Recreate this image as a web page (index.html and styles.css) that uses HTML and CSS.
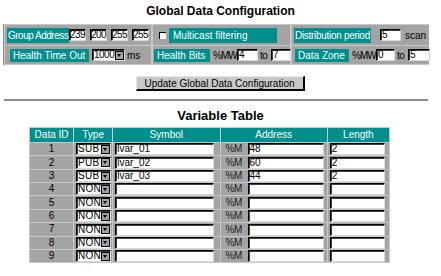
FILE: index.html
```html
<!DOCTYPE html>
<html lang="en">
<head>
  <meta charset="UTF-8" />
  <title>Global Data Configuration</title>
  <link rel="stylesheet" href="styles.css">
</head>
<body>
  <h1 class="title">Global Data Configuration</h1>

  <div class="config">
    <div class="cell">
      <span class="label lb-group">Group Address</span>
      <span class="field ipf">239</span>
      <span class="field ipf">200</span>
      <span class="field ipf">255</span>
      <span class="field ipf">255</span>
    </div>
    <div class="cell">
      <span class="check"></span>
      <span class="label lb-multi">Multicast filtering</span>
    </div>
    <div class="cell">
      <span class="label lb-dist">Distribution period</span>
      <span class="field per">5</span>
      <span class="unit">scan</span>
    </div>

    <div class="cell row2">
      <span class="label lb-health">Health Time Out</span>
      <span class="select sel-ms"><span class="val">1000</span><span class="arrow"></span></span>
      <span class="unit ms">ms</span>
    </div>
    <div class="cell row2">
      <span class="label lb-bits">Health Bits</span>
      <span class="pre">%MW</span>
      <span class="field rng-a">4</span>
      <span class="to">to</span>
      <span class="field rng-b">7</span>
    </div>
    <div class="cell row2">
      <span class="label lb-zone">Data Zone</span>
      <span class="pre">%MW</span>
      <span class="field rng-c">0</span>
      <span class="to">to</span>
      <span class="field rng-d">5</span>
    </div>
  </div>

  <div class="actions">
    <button class="btn">Update Global Data Configuration</button>
  </div>

  <hr class="sep">

  <h2 class="title big">Variable Table</h2>

  <table class="vars">
    <colgroup>
      <col class="c-id"><col class="c-type"><col class="c-sym"><col class="c-addr"><col class="c-len">
    </colgroup>
    <thead>
      <tr><th>Data ID</th><th>Type</th><th>Symbol</th><th>Address</th><th>Length</th></tr>
    </thead>
    <tbody id="rows"></tbody>
  </table>

  <script>
    const data = [
      ["SUB", "lvar_01", "48", "2"],
      ["PUB", "lvar_02", "60", "2"],
      ["SUB", "lvar_03", "44", "2"]
    ];
    let html = "";
    for (let i = 1; i <= 9; i++) {
      const d = data[i - 1] || ["NON", "", "", ""];
      html += `<tr>
        <td class="id">${i}</td>
        <td><span class="select sel-type"><span class="val">${d[0]}</span><span class="arrow"></span></span></td>
        <td><span class="field sym">${d[1]}</span></td>
        <td><span class="pm">%M</span><span class="field adr">${d[2]}</span></td>
        <td><span class="field len">${d[3]}</span></td>
      </tr>`;
    }
    document.getElementById("rows").innerHTML = html;
  </script>
</body>
</html>
```

FILE: styles.css
```css
body {
  margin: 0;
  padding: 0;
  font-family: 'Liberation Sans', Arial, sans-serif;
  font-size: 10px;
  background-color: #fff;
  color: #000;
}
.title {
  font-size: 12px;
  font-weight: bold;
  text-align: center;
  margin: 0;
  padding-top: 4px;
  height: 20px;
  line-height: 14px;
}
.title.big {
  font-size: 13px;
  height: 16px;
  padding-top: 7px;
  line-height: 16px;
}

/* config box */
.config {
  display: grid;
  grid-template-columns: 146px 137px 137px;
  grid-template-rows: 20px 18px;
  gap: 1px 2px;
  margin-left: 3px;
  width: 424px;
  padding: 1px 0 1px 1px;
  background-color: #c8c8c8;
  border-left: 1px solid #8c8c8c;
}
.cell {
  background-color: #a4a4a4;
  display: flex;
  align-items: center;
  white-space: nowrap;
}
.cell > * {
  flex-shrink: 0;
}
.label {
  background-color: #008f8c;
  color: #fff;
  height: 15px;
  line-height: 15px;
  padding: 0 1px;
  box-sizing: border-box;
  overflow: hidden;
}
.row2 .label {
  height: 13px;
  line-height: 13px;
  padding: 0 3px;
}
.lb-group {
  width: 62px;
  letter-spacing: -0.5px;
  margin-left: 2px;
}
.lb-multi {
  width: 108px;
  padding-left: 4px;
}
.lb-dist {
  width: 77px;
  margin-left: 2px;
  letter-spacing: -0.3px;
}
.lb-health {
  width: 79px;
  margin-left: 5px;
}
.lb-bits {
  width: 56px;
  margin-left: 1px;
}
.lb-zone {
  width: 54px;
  margin-left: 3px;
}
.field {
  display: inline-block;
  color: #000;
  background-color: #fff;
  height: 12px;
  padding: 0 0 0 1px;
  box-sizing: border-box;
  border-style: solid;
  border-width: 1px;
  border-color: #000 #d8d8d8 #d8d8d8 #000;
  box-shadow: inset 1px 1px 0 #404040;
  line-height: 10px;
  overflow: visible;
  white-space: nowrap;
}
.ipf {
  width: 17px;
  margin-left: 4px;
  padding-left: 0;
  letter-spacing: -0.6px;
}
.lb-group + .ipf {
  margin-left: 0;
}
.per {
  width: 21px;
  margin-left: 9px;
}
.unit {
  margin-left: 4px;
}
.unit.ms {
  margin-left: 2px;
}
.pre {
  margin-left: 3px;
  letter-spacing: -1px;
  width: 24px;
}
.to {
  margin: 0 2px;
  letter-spacing: -0.5px;
  width: 8px;
}
.rng-a {
  width: 21px;
}
.rng-b {
  width: 20px;
  margin-left: 1px;
}
.rng-c {
  width: 19px;
}
.rng-d {
  width: 22px;
  margin-left: 1px;
}
.check {
  width: 6px;
  height: 6px;
  background-color: #fff;
  border-top: 1px solid #000;
  border-left: 1px solid #000;
  margin: 0 3px 0 6px;
}

/* drop-down look */
.select {
  display: inline-flex;
  align-items: center;
  background-color: #fff;
  height: 12px;
  box-sizing: border-box;
  border-top: 1px solid #000;
  border-left: 1px solid #000;
  border-right: 1px solid #d8d8d8;
  border-bottom: 1px solid #d8d8d8;
  box-shadow: inset 1px 1px 0 #404040;
}
.select .val {
  flex: 1;
  line-height: 10px;
  padding-left: 1px;
  overflow: hidden;
}
.select .arrow {
  width: 9px;
  height: 9px;
  flex-shrink: 0;
  background-color: #a0a0a0;
  border: 1px solid #000;
  box-sizing: border-box;
  position: relative;
}
.select .arrow::after {
  content: "";
  position: absolute;
  left: 1px;
  top: 2px;
  border-left: 2.5px solid transparent;
  border-right: 2.5px solid transparent;
  border-top: 3px solid #000;
}
.sel-ms {
  width: 33px;
  margin-left: 3px;
}
.sel-ms .val {
  letter-spacing: -0.5px;
}
.sel-type {
  width: 35px;
  margin-left: 2px;
  vertical-align: middle;
}
.sel-type .val {
  letter-spacing: 0.2px;
}

.actions {
  text-align: center;
  padding-top: 11px;
  height: 15px;
}
.btn {
  font-family: 'Liberation Sans', Arial, sans-serif;
  font-size: 10px;
  background-color: #c8c8c8;
  border-style: solid;
  border-width: 1px 2px 2px 1px;
  border-color: #e8e8e8 #000 #000 #e8e8e8;
  width: 169px;
  height: 15px;
  padding: 0;
  margin-left: -1px;
  line-height: 11px;
  color: #000;
}
.sep {
  margin: 8px 0 0 4px;
  width: 424px;
  border: none;
  border-top: 2px solid #8c8c8c;
  height: 0;
}

/* variable table */
.vars {
  table-layout: fixed;
  border-collapse: separate;
  border-spacing: 1px;
  background-color: #c8c8c8;
  margin: 3px 0 0 29px;
  width: 361px;
}
.c-id { width: 43px; }
.c-type { width: 38px; }
.c-sym { width: 106px; }
.c-addr { width: 106px; }
.c-len { width: 61px; }
.vars th {
  background-color: #008f8c;
  color: #fff;
  font-weight: normal;
  height: 14px;
  padding: 0;
  line-height: 14px;
}
.vars td {
  background-color: #a4a4a4;
  height: 12px;
  padding: 0;
  line-height: 12px;
  white-space: nowrap;
}
.vars td.id {
  text-align: center;
}
.vars .field {
  vertical-align: middle;
}
.sym {
  width: 99px;
  margin-left: 2px;
}
.pm {
  display: inline-block;
  width: 27px;
  padding-left: 5px;
  box-sizing: border-box;
  color: #222;
  letter-spacing: -0.5px;
  vertical-align: middle;
  line-height: 12px;
}
.adr {
  width: 76px;
}
.len {
  width: 55px;
  margin-left: 2px;
}
```
